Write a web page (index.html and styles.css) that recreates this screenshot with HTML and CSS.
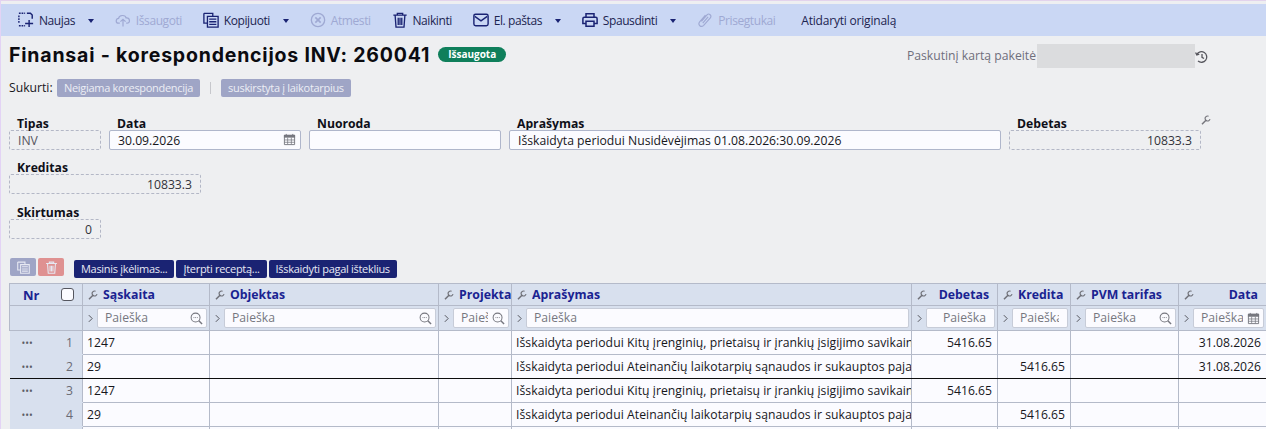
FILE: index.html
```html
<!DOCTYPE html>
<html lang="lt">
<head>
<meta charset="utf-8">
<title>Finansai - korespondencijos</title>
<link rel="stylesheet" href="styles.css">
</head>
<body>
<svg class="defs" width="0" height="0">
  <symbol id="wrench" viewBox="0 0 10 10"><path d="M1 9.200 5.200 5" fill="none" stroke="currentColor" stroke-width="1.500"/><path d="M7.600 1.200A2.500 2.500 0 1 0 9 4.200" fill="none" stroke="currentColor" stroke-width="1.200"/></symbol>
  <symbol id="lens" viewBox="0 0 14 14"><circle cx="6" cy="6" r="4.800" fill="none" stroke="currentColor" stroke-width="1.100"/><path d="M9.500 9.500 13 13" stroke="currentColor" stroke-width="1.600"/><path d="M3.800 6h.9M5.600 6h.9M7.400 6h.9" stroke="currentColor"/></symbol>
  <symbol id="cal" viewBox="0 0 14 14"><path d="M1.500 2.500h11v10h-11z" fill="none" stroke="currentColor"/><path d="M1 2h12v3H1z" fill="currentColor"/><path d="M3.500 1v2M10.500 1v2" stroke="currentColor"/><path d="M1.500 7.500h11M1.500 10h11M5 5v7M9 5v7" stroke="currentColor" stroke-width=".8"/></symbol>
  <symbol id="chev" viewBox="0 0 6 10"><path d="M1 1 5 5 1 9" fill="none" stroke="currentColor" stroke-width="1.200"/></symbol>
  <symbol id="copy" viewBox="0 0 18 18"><path d="M1 1.500h10v3.500M1 1.500v11h4" fill="none" stroke="currentColor" stroke-width="1.500"/><path d="M5 5h12v12H5z" fill="none" stroke="currentColor" stroke-width="1.500"/><path d="M7 8h8M7 11h8M7 14h8" stroke="currentColor" stroke-width="1.500"/></symbol>
  <symbol id="trash" viewBox="0 0 18 18"><path d="M1.500 3.500h15M6 3.500V1.500h6v2M3.500 3.500l1 13.500h9l1-13.500M7 6.500v8M11 6.500v8M9 6.500v8" fill="none" stroke="currentColor" stroke-width="1.500"/></symbol>
</svg>

<div class="toolbar">
  <span class="tool">
    <svg class="ico" viewBox="0 0 18 18"><path d="M1 1.500h7M1 4v9M1 15.500h7" fill="none" stroke="currentColor" stroke-width="1.600" stroke-dasharray="2 1"/><path d="M10 1.500h4l2 2v4M12.500 9v8M8 13h9" fill="none" stroke="currentColor" stroke-width="1.600"/></svg>
    Naujas<i class="caret"></i>
  </span>
  <span class="tool off">
    <svg class="ico" viewBox="0 0 20 18"><path d="M6 13H4.500C.5 13 .5 7.500 4.500 7 5 2.500 13 2 14 6.500 19 6 19.500 13 15 13h-1" fill="none" stroke="currentColor" stroke-width="1.500"/><path d="M10 17V8M6.800 11 10 8l3.200 3" fill="none" stroke="currentColor" stroke-width="1.500"/></svg>
    Išsaugoti
  </span>
  <span class="tool">
    <svg class="ico" viewBox="0 0 18 18"><use href="#copy"/></svg>
    Kopijuoti<i class="caret"></i>
  </span>
  <span class="tool off">
    <svg class="ico" viewBox="0 0 18 18"><circle cx="9" cy="9" r="7.500" fill="none" stroke="currentColor" stroke-width="1.500"/><path d="M6 6l6 6M12 6l-6 6" stroke="currentColor" stroke-width="1.800"/></svg>
    Atmesti
  </span>
  <span class="tool">
    <svg class="ico" viewBox="0 0 18 18"><use href="#trash"/></svg>
    Naikinti
  </span>
  <span class="tool">
    <svg class="ico" viewBox="0 0 18 18"><rect x="1" y="2.500" width="16" height="13" rx="2" fill="none" stroke="currentColor" stroke-width="1.600"/><path d="M2 5l7 5 7-5" fill="none" stroke="currentColor" stroke-width="1.600"/></svg>
    El. paštas<i class="caret"></i>
  </span>
  <span class="tool">
    <svg class="ico" viewBox="0 0 18 18"><path d="M4.500 6V2h9v4M4.500 13H1V7.500C1 6.500 1.500 6 2.500 6h13c1 0 1.500.5 1.500 1.500V13h-3.500M4.500 10.500h9V16h-9z" fill="none" stroke="currentColor" stroke-width="1.700"/></svg>
    Spausdinti<i class="caret"></i>
  </span>
  <span class="tool off">
    <svg class="ico" viewBox="0 0 18 18"><path d="M5 10.500 11.500 3c2-2 5.500 1 3.500 3.500L7.500 15c-3 3-7-.5-4.500-4L9.500 3.500M6.500 12.500l6-7" fill="none" stroke="currentColor" stroke-width="1.300"/></svg>
    Prisegtukai
  </span>
  <span class="tool last">Atidaryti originalą</span>
</div>

<div class="head">
  <div class="title-row">
    <h1>Finansai - korespondencijos INV: 260041</h1>
    <span class="badge">Išsaugota</span>
    <div class="changed">
      <span>Paskutinį kartą pakeitė</span>
      <span class="mask"></span>
      <svg class="hist" viewBox="0 0 14 14"><path d="M1.800 4.500A5.300 5.300 0 1 1 3 11M.6 2.500l1.200 2.500 2.500-.8M7 4v3.300l2 1.200" fill="none" stroke="currentColor" stroke-width="1.300"/></svg>
    </div>
  </div>
  <div class="create-row">
    <span class="create-label">Sukurti:</span>
    <span class="chip">Neigiama korespondencija</span>
    <span class="sep"></span>
    <span class="chip">suskirstyta į laikotarpius</span>
  </div>
</div>

<div class="form">
  <svg class="form-wrench"><use href="#wrench"/></svg>
  <div class="form-row">
    <div class="field w-s"><label>Tipas</label><div class="ro">INV</div></div>
    <div class="field w-m"><label>Data</label><div class="inp">30.09.2026<svg class="cal"><use href="#cal"/></svg></div></div>
    <div class="field w-m"><label>Nuoroda</label><div class="inp"></div></div>
    <div class="field w-l"><label>Aprašymas</label><div class="inp">Išskaidyta periodui Nusidėvėjimas 01.08.2026:30.09.2026</div></div>
    <div class="field w-m"><label>Debetas</label><div class="ro num">10833.3</div></div>
  </div>
  <div class="form-row row-2">
    <div class="field w-m"><label>Kreditas</label><div class="ro num">10833.3</div></div>
  </div>
  <div class="form-row row-3">
    <div class="field w-s"><label>Skirtumas</label><div class="ro num">0</div></div>
  </div>
</div>

<div class="actions">
  <span class="sq blue"><svg><use href="#copy"/></svg></span>
  <span class="sq red"><svg><use href="#trash"/></svg></span>
  <span class="btn first">Masinis įkėlimas...</span>
  <span class="btn">Įterpti receptą...</span>
  <span class="btn">Išskaidyti pagal išteklius</span>
</div>

<table class="grid">
  <colgroup>
    <col class="c-dots"><col class="c-nr"><col class="c-acc"><col class="c-obj"><col class="c-prj"><col class="c-desc"><col class="c-deb"><col class="c-kre"><col class="c-pvm"><col class="c-dat">
  </colgroup>
  <thead>
    <tr class="hrow">
      <th colspan="2" class="nr-h"><div class="nr-wrap"><span>Nr</span><i class="check"></i></div></th>
      <th><div class="th"><svg class="wr"><use href="#wrench"/></svg><span class="tt">Sąskaita</span></div></th>
      <th><div class="th"><svg class="wr"><use href="#wrench"/></svg><span class="tt">Objektas</span></div></th>
      <th><div class="th"><svg class="wr"><use href="#wrench"/></svg><span class="tt">Projektas</span></div></th>
      <th><div class="th"><svg class="wr"><use href="#wrench"/></svg><span class="tt">Aprašymas</span></div></th>
      <th><div class="th"><svg class="wr"><use href="#wrench"/></svg><span class="tt right">Debetas</span></div></th>
      <th><div class="th"><svg class="wr"><use href="#wrench"/></svg><span class="tt right">Kredita</span></div></th>
      <th><div class="th"><svg class="wr"><use href="#wrench"/></svg><span class="tt">PVM tarifas</span></div></th>
      <th><div class="th"><svg class="wr"><use href="#wrench"/></svg><span class="tt right">Data</span></div></th>
    </tr>
    <tr class="frow">
      <th colspan="2"></th>
      <th><div class="fl"><svg class="ch"><use href="#chev"/></svg><div class="sb"><span class="ph">Paieška</span><svg class="lens"><use href="#lens"/></svg></div></div></th>
      <th><div class="fl"><svg class="ch"><use href="#chev"/></svg><div class="sb"><span class="ph">Paieška</span><svg class="lens"><use href="#lens"/></svg></div></div></th>
      <th><div class="fl"><svg class="ch"><use href="#chev"/></svg><div class="sb"><span class="ph">Paieška</span><svg class="lens"><use href="#lens"/></svg></div></div></th>
      <th><div class="fl"><svg class="ch"><use href="#chev"/></svg><div class="sb"><span class="ph">Paieška</span></div></div></th>
      <th><div class="fl"><svg class="ch"><use href="#chev"/></svg><div class="sb end"><span class="ph">Paieška</span></div></div></th>
      <th><div class="fl"><svg class="ch"><use href="#chev"/></svg><div class="sb"><span class="ph">Paieška</span></div></div></th>
      <th><div class="fl"><svg class="ch"><use href="#chev"/></svg><div class="sb"><span class="ph">Paieška</span><svg class="lens"><use href="#lens"/></svg></div></div></th>
      <th><div class="fl"><svg class="ch"><use href="#chev"/></svg><div class="sb"><span class="ph">Paieška</span><svg class="lens"><use href="#cal"/></svg></div></div></th>
    </tr>
  </thead>
  <tbody>
    <tr>
      <td class="dots">•••</td><td class="no">1</td><td>1247</td><td></td><td></td>
      <td class="desc"><div class="clip">Išskaidyta periodui Kitų įrenginių, prietaisų ir įrankių įsigijimo savikaina</div></td>
      <td class="r">5416.65</td><td></td><td></td><td class="r">31.08.2026</td>
    </tr>
    <tr class="sect">
      <td class="dots">•••</td><td class="no">2</td><td>29</td><td></td><td></td>
      <td class="desc"><div class="clip">Išskaidyta periodui Ateinančių laikotarpių sąnaudos ir sukauptos pajamos</div></td>
      <td></td><td class="r">5416.65</td><td></td><td class="r">31.08.2026</td>
    </tr>
    <tr>
      <td class="dots">•••</td><td class="no">3</td><td>1247</td><td></td><td></td>
      <td class="desc"><div class="clip">Išskaidyta periodui Kitų įrenginių, prietaisų ir įrankių įsigijimo savikaina</div></td>
      <td class="r">5416.65</td><td></td><td></td><td></td>
    </tr>
    <tr>
      <td class="dots">•••</td><td class="no">4</td><td>29</td><td></td><td></td>
      <td class="desc"><div class="clip">Išskaidyta periodui Ateinančių laikotarpių sąnaudos ir sukauptos pajamos</div></td>
      <td></td><td class="r">5416.65</td><td></td><td></td>
    </tr>
    <tr>
      <td class="dots"></td><td class="no"></td><td></td><td></td><td></td><td></td><td></td><td></td><td></td><td></td>
    </tr>
  </tbody>
</table>
</body>
</html>
```

FILE: styles.css
```css
* { box-sizing: border-box; }
html, body { height: 429px; overflow: hidden; }
body {
  margin: 0;
  padding-top: 3px;
  background: #eeeff1;
  border-top: 1px solid #e3d3ec;
  border-left: 1px solid #e3d3f5;
  font: 12.200px/16px "Open Sans", "Noto Sans", sans-serif;
  color: #17171c;
}
.defs { position: absolute; }

.toolbar {
  height: 32px;
  background: #cad7f4;
  display: flex;
  align-items: center;
  padding-left: 17px;
  color: #1a2373;
  font-size: 12px;
  letter-spacing: -.42px;
}
.tool { display: flex; align-items: center; white-space: nowrap; margin-right: 20.900px; color: #1c2450; padding-top: 1px; }
.tool .ico { color: #1a2373; margin-top: -1px; }
.tool.off, .tool.off .ico { color: #9fa9d3; }
.tool.last { margin-left: 5px; letter-spacing: -.2px; }
.ico { width: 16px; height: 16px; margin-right: 5px; }
.caret { width: 0; height: 0; margin-left: 13px; border: 3px solid transparent; border-top: 4px solid #1a2373; border-bottom: 0; }

.head { padding: 0 0 0 8px; }
.title-row { display: flex; align-items: center; height: 37px; }
h1 { margin: 0; font: 700 19.500px/24px Inter, "Liberation Sans", sans-serif; letter-spacing: .8px; color: #0b0b10; }
.badge { margin-left: 8px; background: #0f7f5b; color: #fff; font: 700 10px/15px "Open Sans", sans-serif; border-radius: 8px; padding: 0 10px; }
.changed { margin-left: auto; margin-right: 57px; display: flex; align-items: center; color: #6e6e7c; margin-top: 2px; }
.mask { display: block; width: 158px; height: 24px; background: #dbdcde; margin-left: 1px; }
.hist { width: 14px; height: 14px; color: #55555c; margin-top: 3px; }

.create-row { display: flex; align-items: center; height: 18px; margin-top: 6px; }
.create-label { width: 48px; }
.chip { background: #9fa5c6; color: #eceef5; font-size: 11px; letter-spacing: -.3px; line-height: 18px; padding: 0 7px; border-radius: 2px; height: 18px; }
.sep { width: 1px; height: 12px; background: #c6c7cc; margin: 0 10px 0 10px; }

.form { position: relative; margin-top: 19px; padding-left: 8px; }
.form-wrench { position: absolute; left: 1200px; top: -1px; width: 10px; height: 10px; color: #77777e; }
.form-row { display: flex; gap: 8px; }
.row-2 { margin-top: 10px; }
.row-3 { margin-top: 11px; }
.field { flex: none; }
.w-s { width: 92px; }
.w-m { width: 192px; }
.w-l { width: 492px; }
label { display: block; height: 14px; padding-left: 8px; font-weight: 700; line-height: 15px; color: #0f0f18; }
.ro, .inp { height: 20px; padding: 0 8px; line-height: 19px; white-space: nowrap; }
.ro { border: 1px dashed #b3b7c6; border-radius: 2px; color: #55555e; }
.num { text-align: right; color: #33333a; }
.inp { position: relative; border: 1px solid #afb6cb; border-radius: 2px; background: #fbfbff; }
.cal { position: absolute; right: 4px; top: 2px; width: 13px; height: 13px; color: #76777f; }

.actions { display: flex; align-items: flex-end; gap: 2px; margin: 19px 0 0 9px; height: 20px; }
.sq { width: 26px; height: 18px; margin-bottom: 2px; border-radius: 2px; display: flex; align-items: center; justify-content: center; color: #e6e8f2; }
.sq svg { width: 13px; height: 13px; }
.blue { background: #9fa5c6; }
.red { background: #df9191; margin-right: 8px; }
.btn { height: 18px; background: #1a2373; color: #e7e9f3; font-size: 11px; letter-spacing: -.3px; line-height: 18px; padding: 0 7px; border-radius: 2px; white-space: nowrap; }

.grid { border-collapse: collapse; table-layout: fixed; width: 1257px; margin: 5px 0 0 8px; }
.c-dots { width: 40px; } .c-nr { width: 33px; }
.c-acc { width: 127px; } .c-obj { width: 229px; } .c-prj { width: 73px; }
.c-desc { width: 400px; } .c-deb { width: 86px; } .c-kre { width: 73px; }
.c-pvm { width: 108px; } .c-dat { width: 88px; }
.grid th, .grid td { border: 1px solid #b4bac9; padding: 0; overflow: hidden; white-space: nowrap; }
.grid th { background: #d8e0ee; font-weight: 700; }
.hrow { height: 22px; }
.frow { height: 25px; }
.grid tbody tr { height: 24px; }
.grid td { background: #fbfbff; padding: 0 5px 0 4px; line-height: 16px; color: #17171c; }
.grid td.desc { padding-right: 0; letter-spacing: .05px; }
.grid td.dots { background: #d8e0ee; border: 0; color: #5c5d66; font-size: 10px; padding: 0 0 0 12px; border-bottom: 1px solid #d8e0ee; }
.grid td.no { background: #d8e0ee; border: 0; text-align: right; color: #6a6b74; padding: 0 9px 0 0; border-bottom: 1px solid #d8e0ee; }
.grid td.r { text-align: right; }
.grid tr.sect td { border-bottom-color: #0d0d0d; }
.clip { overflow: hidden; white-space: nowrap; }
.nr-wrap { display: flex; align-items: center; justify-content: space-between; padding: 0 8px 0 13px; color: #1a2391; font-size: 13px; }
.check { width: 13px; height: 13px; border: 1px solid #55565f; border-radius: 3px; background: #fbfbff; }
.th { display: flex; align-items: center; padding-left: 5px; height: 20px; }
.wr { flex: none; width: 10px; height: 10px; color: #6f7078; margin-right: 5px; }
.tt { flex: 1; min-width: 0; overflow: hidden; color: #1a2391; font-size: 12.300px; text-align: left; padding-right: 1px; }
.tt.right { text-align: right; padding-right: 8px; }
.fl { display: flex; align-items: center; padding: 0 2px 0 5px; height: 23px; }
.ch { flex: none; width: 5px; height: 9px; color: #55565e; margin-right: 4px; }
.sb { flex: 1; min-width: 0; height: 20px; display: flex; align-items: center; background: #fbfbff; border: 1px solid #c7ccd8; border-radius: 2px; padding: 0 8px 0 7px; overflow: hidden; }
.sb.end { justify-content: flex-end; }
.ph { flex: 1; min-width: 0; overflow: hidden; font-weight: 400; color: #76777f; text-align: left; }
.sb.end .ph { flex: none; }
.lens { flex: none; width: 13px; height: 13px; margin: 0 -5px 0 4px; color: #76777f; }
```
